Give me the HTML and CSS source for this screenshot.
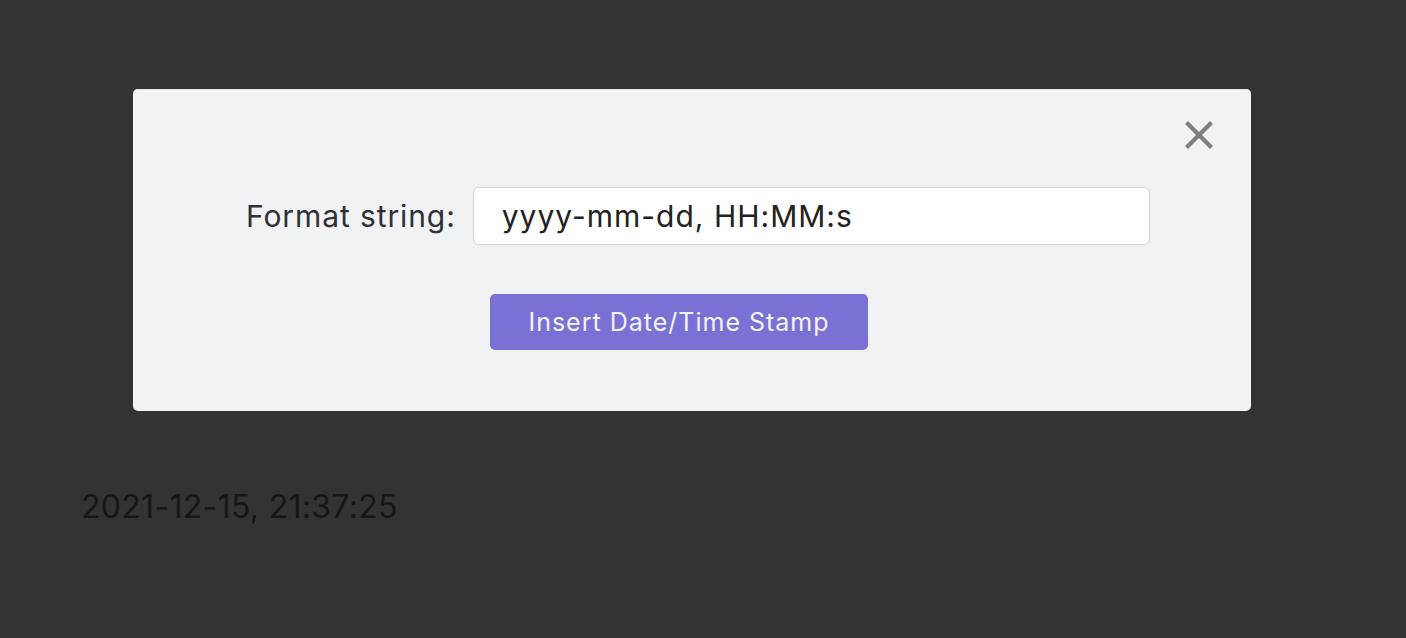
FILE: index.html
```html
<!DOCTYPE html>
<html>
<head>
<meta charset="utf-8">
<link rel="stylesheet" href="styles.css">
</head>
<body>
<div class="page">
  <div class="modal">
    <button class="close" aria-label="Close">
      <svg width="30" height="30" viewBox="0 0 30 30"><path d="M4 4 L26 26 M26 4 L4 26" stroke="#7f7f7f" stroke-width="4.2" stroke-linecap="square"/></svg>
    </button>
    <div class="row">
      <label class="label">Format string:</label>
      <div class="input">yyyy-mm-dd, HH:MM:s</div>
    </div>
    <div class="actions">
      <button class="primary">Insert Date/Time Stamp</button>
    </div>
  </div>
  <div class="stamp">2021-12-15, 21:37:25</div>
</div>
</body>
</html>
```
FILE: styles.css
```css
html, body { margin: 0; padding: 0; }
body {
  background: #333333;
  font-family: Inter, "Noto Sans", sans-serif;
  width: 1406px;
  height: 638px;
  overflow: hidden;
}
.page {
  display: flex;
  flex-direction: column;
  align-items: flex-start;
  padding-top: 89px;
}
.modal {
  position: relative;
  margin-left: 133px;
  width: 1118px;
  height: 322px;
  box-sizing: border-box;
  background: #f1f2f4;
  border-radius: 5px;
  box-shadow: inset 0 1px 0 #e6e7eb;
  padding-top: 98px;
}
.close {
  position: absolute;
  top: 31px;
  right: 37px;
  border: 0;
  background: none;
  padding: 0;
  width: 30px;
  height: 30px;
}
.close svg { display: block; }
.row {
  display: flex;
  align-items: center;
  padding-left: 113px;
}
.label {
  font-size: 30px;
  letter-spacing: 0.9px;
  color: #2e3036;
  margin-right: 17px;
}
.input {
  width: 677px;
  height: 58px;
  box-sizing: border-box;
  background: #fff;
  border: 1.5px solid #d3d6db;
  border-radius: 6px;
  font-size: 30px;
  letter-spacing: 1px;
  color: #222;
  padding-left: 28px;
  display: flex;
  align-items: center;
}
.actions {
  padding-left: 357px;
  margin-top: 49px;
}
.primary {
  width: 378px;
  height: 56px;
  border: 0;
  border-radius: 5px;
  background: #7a71d4;
  color: #f4f3fb;
  font-family: Inter, "Noto Sans", sans-serif;
  font-size: 25px;
  letter-spacing: 1px;
  padding: 0;
}
.stamp {
  margin: 76px 0 0 81px;
  font-size: 32px;
  letter-spacing: 0.3px;
  color: #161616;
}
```
